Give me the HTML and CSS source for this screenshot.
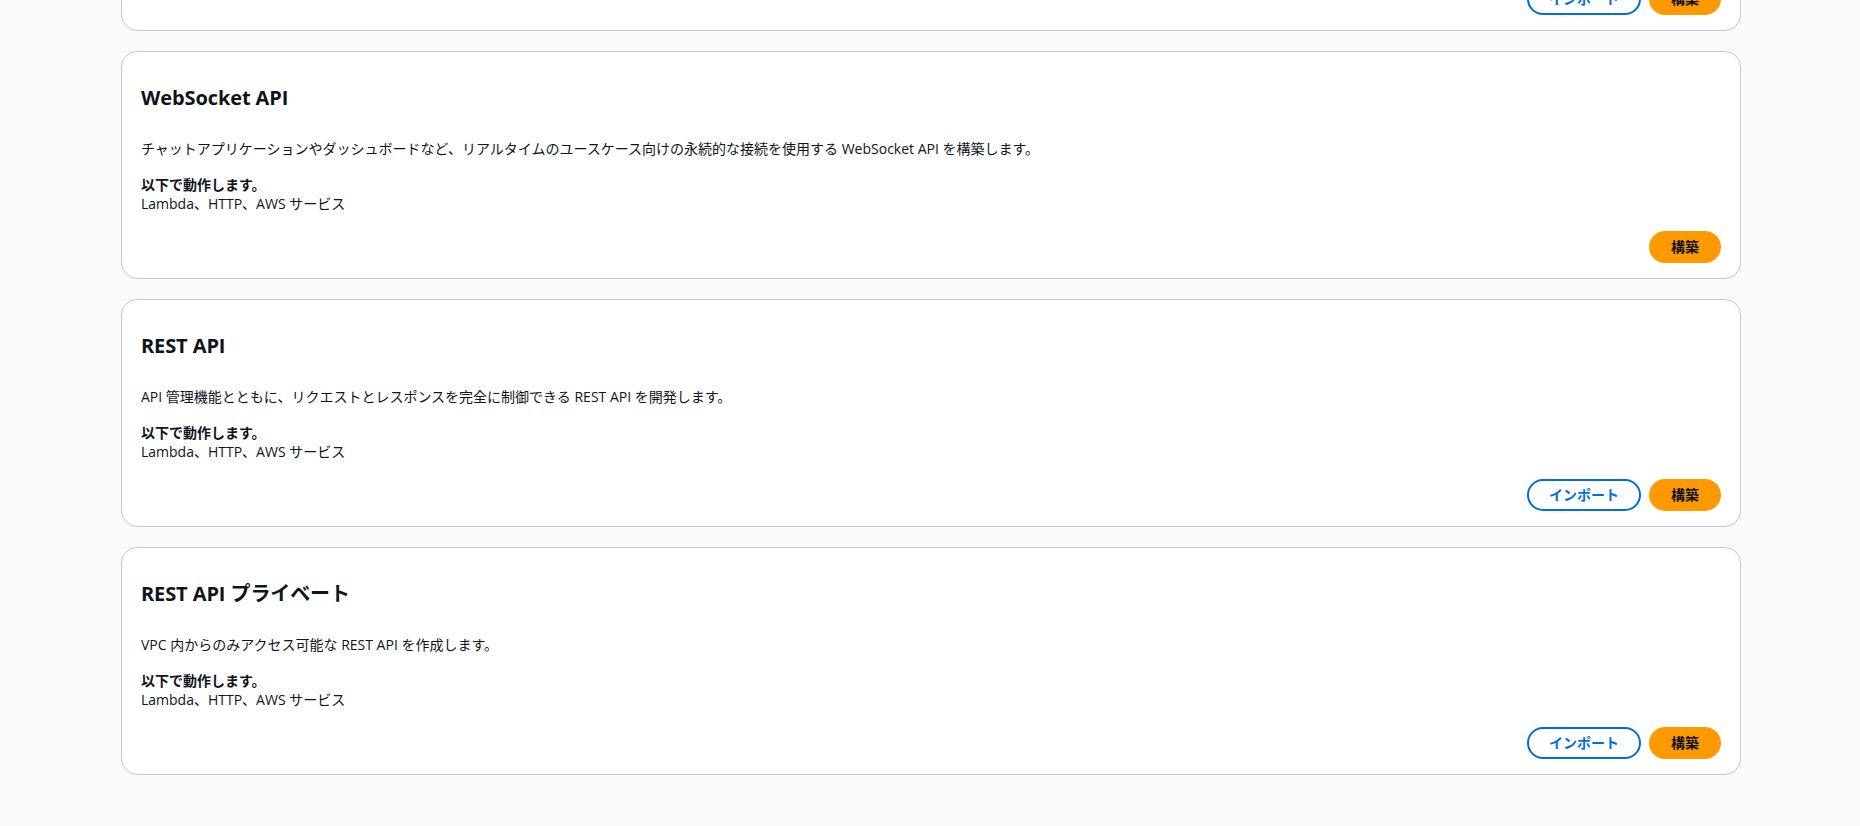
FILE: index.html
```html
<!DOCTYPE html>
<html lang="ja">
<head>
<meta charset="utf-8">
<title>API タイプを選択</title>
<link rel="stylesheet" href="styles.css">
</head>
<body>
<main class="list">
  <section class="card">
    <h2 class="card-title">HTTP API</h2>
    <p class="card-desc">Lambda 関数または HTTP バックエンドにリクエストを送信する HTTP API を構築します。</p>
    <div class="works">
      <div class="works-label">以下で動作します。</div>
      <div class="works-value">Lambda、HTTP バックエンド</div>
    </div>
    <div class="actions">
      <button class="btn btn-normal">インポート</button>
      <button class="btn btn-primary">構築</button>
    </div>
  </section>

  <section class="card">
    <h2 class="card-title">WebSocket API</h2>
    <p class="card-desc">チャットアプリケーションやダッシュボードなど、リアルタイムのユースケース向けの永続的な接続を使用する WebSocket API を構築します。</p>
    <div class="works">
      <div class="works-label">以下で動作します。</div>
      <div class="works-value">Lambda、HTTP、AWS サービス</div>
    </div>
    <div class="actions">
      <button class="btn btn-primary">構築</button>
    </div>
  </section>

  <section class="card">
    <h2 class="card-title">REST API</h2>
    <p class="card-desc">API 管理機能とともに、リクエストとレスポンスを完全に制御できる REST API を開発します。</p>
    <div class="works">
      <div class="works-label">以下で動作します。</div>
      <div class="works-value">Lambda、HTTP、AWS サービス</div>
    </div>
    <div class="actions">
      <button class="btn btn-normal">インポート</button>
      <button class="btn btn-primary">構築</button>
    </div>
  </section>

  <section class="card">
    <h2 class="card-title">REST API <span class="title-sub">プライベート</span></h2>
    <p class="card-desc">VPC 内からのみアクセス可能な REST API を作成します。</p>
    <div class="works">
      <div class="works-label">以下で動作します。</div>
      <div class="works-value">Lambda、HTTP、AWS サービス</div>
    </div>
    <div class="actions">
      <button class="btn btn-normal">インポート</button>
      <button class="btn btn-primary">構築</button>
    </div>
  </section>
</main>
</body>
</html>
```
FILE: styles.css
```css
html, body {
  margin: 0;
  padding: 0;
  background: #fafafa;
  font-family: "Open Sans", "Noto Sans CJK JP", sans-serif;
  color: #0f141a;
  overflow: hidden;
}

.list {
  display: flex;
  flex-direction: column;
  gap: 20px;
  width: 1620px;
  margin: -197px 0 0 121px;
}

.card {
  box-sizing: border-box;
  height: 228px;
  background: #ffffff;
  border: 1px solid #c6c6cd;
  border-radius: 16px;
  padding: 34px 19px 15px 19px;
  display: flex;
  flex-direction: column;
}

.card-title {
  margin: 0;
  font-size: 20px;
  line-height: 24px;
  font-weight: 700;
  letter-spacing: -0.1px;
}

.title-sub {
  font-weight: 600;
}

.card-desc {
  margin: 29px 0 0 0;
  font-size: 14px;
  line-height: 20px;
}

.works {
  margin-top: 16px;
  font-size: 14px;
  line-height: 20px;
}

.works-label {
  font-weight: 700;
  line-height: 19px;
}

.actions {
  margin-top: auto;
  display: flex;
  justify-content: flex-end;
  gap: 8px;
}

.btn {
  box-sizing: border-box;
  height: 32px;
  padding: 4px 20px;
  border-radius: 20px;
  border: 2px solid;
  font-family: "Open Sans", "Noto Sans CJK JP", sans-serif;
  font-size: 14px;
  line-height: 20px;
  font-weight: 700;
  cursor: pointer;
}

.btn-normal {
  background: #ffffff;
  border-color: #006ce0;
  color: #006ce0;
}

.btn-primary {
  background: #ff9900;
  border-color: #ff9900;
  color: #0f141a;
}
```
